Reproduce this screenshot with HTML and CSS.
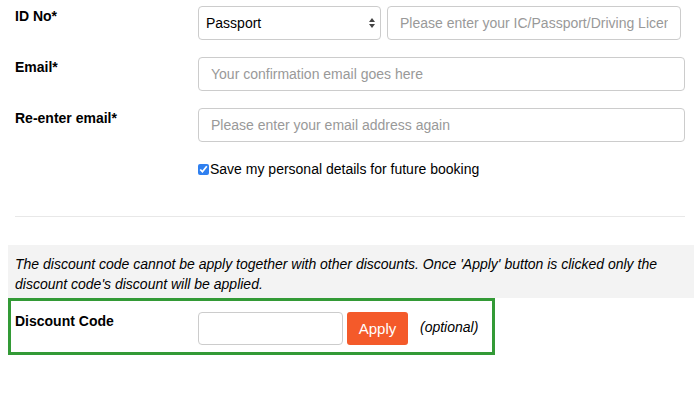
FILE: index.html
```html
<!DOCTYPE html>
<html>
<head>
<meta charset="utf-8">
<link rel="stylesheet" href="styles.css">
</head>
<body>
<div class="page">
  <div class="form">
    <div class="row">
      <label class="label">ID No*</label>
      <div class="field split">
        <div class="select-wrap">
          <select class="control select"><option>Passport</option></select>
          <svg class="arrows" width="8" height="12" viewBox="0 0 8 12"><path d="M4 1 L7 5 H1 Z M4 11 L7 7 H1 Z" fill="#444"/></svg>
        </div>
        <input class="control grow" type="text" placeholder="Please enter your IC/Passport/Driving License No">
      </div>
    </div>
    <div class="row">
      <label class="label">Email*</label>
      <div class="field"><input class="control grow" type="text" placeholder="Your confirmation email goes here"></div>
    </div>
    <div class="row">
      <label class="label">Re-enter email*</label>
      <div class="field"><input class="control grow" type="text" placeholder="Please enter your email address again"></div>
    </div>
    <div class="row check-row">
      <span class="label"></span>
      <label class="check"><input type="checkbox" checked>Save my personal details for future booking</label>
    </div>
    <hr class="divider">
  </div>
  <div class="notice">The discount code cannot be apply together with other discounts. Once 'Apply' button is clicked only the discount code's discount will be applied.</div>
  <div class="discount">
    <label class="label dlabel">Discount Code</label>
    <input class="control code" type="text">
    <button class="apply">Apply</button>
    <span class="optional">(optional)</span>
  </div>
</div>
</body>
</html>
```
FILE: styles.css
```css
* { box-sizing: border-box; }
body {
  margin: 0;
  background: #fff;
  font-family: "Liberation Sans", Arial, sans-serif;
  font-size: 14px;
  color: #000;
}
.page { padding: 6px 0 0 8px; }
.form { padding: 0 9px 0 7px; }
.row { display: flex; align-items: flex-start; margin-bottom: 17px; }
.label {
  width: 183px;
  flex: none;
  font-weight: bold;
  line-height: 20px;
}
.field { flex: 1; display: flex; }
.split { gap: 6px; padding-right: 4px; }
.control {
  height: 34px;
  border: 1px solid #ccc;
  border-radius: 4px;
  padding: 6px 12px;
  font-family: "Liberation Sans", Arial, sans-serif;
  font-size: 14px;
  color: #555;
  background: #fff;
  outline: none;
}
.control::placeholder { color: #999; }
.grow { flex: 1; min-width: 0; }
.select-wrap { position: relative; width: 183px; flex: none; }
.select {
  width: 100%;
  -webkit-appearance: none;
  appearance: none;
  padding-left: 7px;
  color: #000;
}
.arrows { position: absolute; right: 5px; top: 11px; }
.check-row { margin-bottom: 0; }
.check {
  display: flex;
  align-items: center;
  line-height: 20px;
}
.check input {
  margin: 0 1px 0 0;
  width: 11px;
  height: 11px;
  accent-color: #2f80f0;
}
.divider {
  border: 0;
  border-top: 1px solid #e8e8e8;
  margin: 37px 0 28px;
}
.notice {
  background: #f3f3f3;
  font-style: italic;
  font-size: 14px;
  line-height: 20px;
  padding: 9px 7px 4px;
}
.discount {
  width: 487px;
  border: 3px solid #339a36;
  padding: 11px 0 7px 4px;
  display: flex;
  align-items: flex-start;
}
.dlabel { margin-top: -1px; }
.code { width: 145px; height: 33px; }
.apply {
  margin-left: 4px;
  width: 61px;
  height: 33px;
  border: 0;
  border-radius: 3px;
  background: #f45a2a;
  color: #fff;
  font-family: "Liberation Sans", Arial, sans-serif;
  font-size: 15px;
}
.optional {
  margin-left: 12px;
  font-style: italic;
  line-height: 31px;
}
```
